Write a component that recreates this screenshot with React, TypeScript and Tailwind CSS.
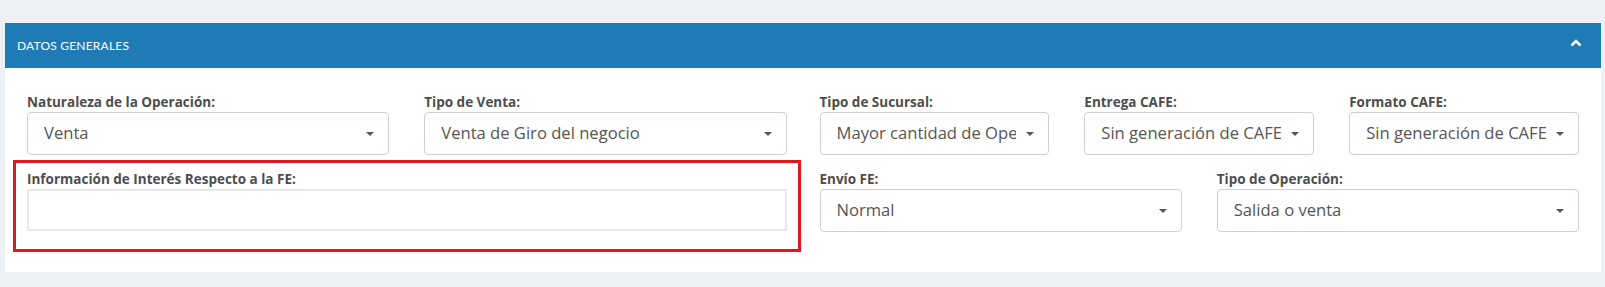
import {ReactNode} from "react";

const sans = "font-['Open_Sans',sans-serif]";

function Label({children}: {children: ReactNode}) {
    return <div className="h-[20px] text-[13.5px] leading-[20px] font-bold text-[#4d4d4d]">{children}</div>;
}

function Select({label, value}: {label: string; value: string}) {
    return (
        <div className="min-w-0">
            <Label>{label}</Label>
            <div className="flex h-[43px] items-center rounded-[4px] border border-[#ccd1d6] bg-white pl-[16px] pr-[14px]">
                <span className="min-w-0 flex-1 overflow-hidden whitespace-nowrap text-[16.6px] text-[#555]">
                    {value}
                </span>
                <span className="ml-[10px] h-0 w-0 shrink-0 border-x-[4px] border-t-[4px] border-x-transparent border-t-[#555]" />
            </div>
        </div>
    );
}

export default function App() {
    return (
        <div className={`min-h-[287px] bg-[#eef1f3] pt-[23px] pl-[5px] pr-[4px] ${sans}`}>
            <div className="bg-white">
                {/* Header */}
                <div className="flex h-[45px] items-center justify-between bg-[#1f7bb6] pl-[12px] pr-[19px]">
                    <span className="font-['Lato',sans-serif] text-[12px] tracking-[0.2px] text-white uppercase">
                        Datos Generales
                    </span>
                    <svg width="12" height="8" viewBox="0 0 12 8" className="-mt-[6px]">
                        <path d="M1.5 6.5 L6 2 L10.5 6.5" fill="none" stroke="white" strokeWidth="2.6" />
                    </svg>
                </div>

                {/* Body */}
                <div className="grid grid-cols-2 gap-x-[33px] px-[22px] pt-[24px] pb-[20px]">
                    <div>
                        <div className="grid grid-cols-2 gap-x-[35px]">
                            <Select label="Naturaleza de la Operación:" value="Venta" />
                            <Select label="Tipo de Venta:" value="Venta de Giro del negocio" />
                        </div>
                        <div className="-mx-[14px] mt-[5px] border-[3px] border-[#e3161d] px-[11px] pt-[6px] pb-[18px]">
                            <Label>Información de Interés Respecto a la FE:</Label>
                            <div className="h-[42px] border-2 border-[#e6e9ec] bg-white" />
                        </div>
                    </div>
                    <div>
                        <div className="grid grid-cols-3 gap-x-[35px]">
                            <Select label="Tipo de Sucursal:" value="Mayor cantidad de Operaciones" />
                            <Select label="Entrega CAFE:" value="Sin generación de CAFE" />
                            <Select label="Formato CAFE:" value="Sin generación de CAFE" />
                        </div>
                        <div className="mt-[14px] grid grid-cols-2 gap-x-[35px]">
                            <Select label="Envío FE:" value="Normal" />
                            <Select label="Tipo de Operación:" value="Salida o venta" />
                        </div>
                    </div>
                </div>
            </div>
        </div>
    );
}
